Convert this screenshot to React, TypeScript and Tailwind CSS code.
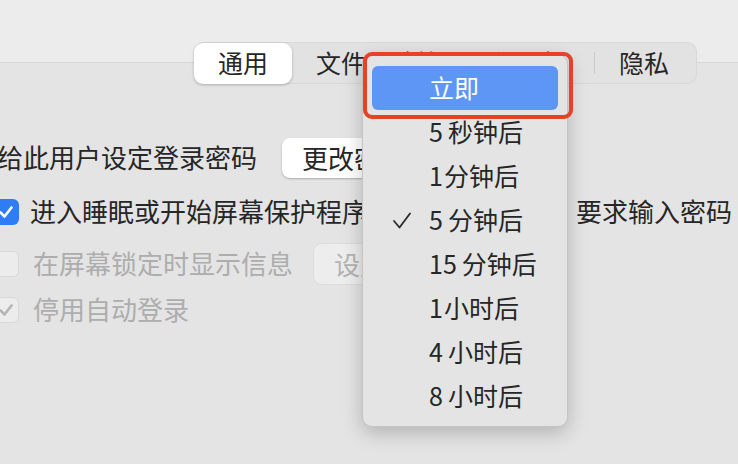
import { ReactNode } from 'react'

const font = { fontFamily: '"Noto Sans CJK SC", "Noto Sans", sans-serif' }

const items: [string, string][] = [
  ['', '立即'],
  ['5', '秒钟后'],
  ['1', '分钟后'],
  ['5', '分钟后'],
  ['15', '分钟后'],
  ['1', '小时后'],
  ['4', '小时后'],
  ['8', '小时后'],
]

function Checkbox({ checked, disabled }: { checked?: boolean; disabled?: boolean }) {
  if (checked && !disabled) {
    return (
      <div className="w-[26px] h-[26px] rounded-[6px] bg-[#2f7df6] flex items-center justify-center shrink-0">
        <svg width="18" height="18" viewBox="0 0 18 18">
          <polyline points="3.5,9.5 7.5,13.5 14.5,4.5" fill="none" stroke="white" strokeWidth="2.6" strokeLinecap="round" strokeLinejoin="round" />
        </svg>
      </div>
    )
  }
  return (
    <div className="w-[26px] h-[26px] rounded-[6px] bg-[#ececec] border border-[#d9d9d9] flex items-center justify-center shrink-0">
      {checked && (
        <svg width="18" height="18" viewBox="0 0 18 18">
          <polyline points="3.5,9.5 7.5,13.5 14.5,4.5" fill="none" stroke="#b5b5b5" strokeWidth="2.6" strokeLinecap="round" strokeLinejoin="round" />
        </svg>
      )}
    </div>
  )
}

function Button({ children, disabled, className = '' }: { children: ReactNode; disabled?: boolean; className?: string }) {
  return (
    <div className={`h-[40px] rounded-[8px] flex items-center px-[20px] shrink-0 ${disabled ? 'bg-[#ededed] text-[#b3b3b3] shadow-[0_0_0_1px_#dcdcdc]' : 'bg-white text-[#262626] shadow-[0_1px_2px_rgba(0,0,0,0.25)]'} ${className}`}>
      {children}
    </div>
  )
}

export default function App() {
  return (
    <div className="relative w-[738px] h-[464px] overflow-hidden bg-[#e4e4e4] text-[26px] leading-none text-[#262626]" style={font}>
      {/* toolbar */}
      <div className="h-[63px] bg-[#ececec] border-b border-[#d6d6d6]" />

      {/* tabs */}
      <div className="relative -mt-[21px] ml-[194px] w-[503px] h-[42px] rounded-[10px] bg-[#e2e2e2] shadow-[inset_0_0_0_1px_#d8d8d8] flex items-center text-[25px]">
        <div className="w-[98px] h-[41px] rounded-[9px] bg-white shadow-[0_1px_3px_rgba(0,0,0,0.25)] flex items-center justify-center">
          <span className="-mt-[2px]">通用</span>
        </div>
        <div className="w-[180px] pl-[24px] -mt-[2px] whitespace-nowrap">文件保险箱</div>
        <div className="w-[122px] pl-[10px] -mt-[2px] whitespace-nowrap">防火墙</div>
        <div className="w-[1px] h-[22px] bg-[#c9c9c9]" />
        <div className="pl-[24px] -mt-[2px]">隐私</div>
      </div>

      {/* rows */}
      <div className="flex flex-col mt-[54px] whitespace-nowrap">
        <div className="flex items-center h-[40px] -ml-[3px]">
          <span className="-mt-[3px]">给此用户设定登录密码</span>
          <Button className="ml-[25px]">更改密码…</Button>
        </div>
        <div className="flex items-center h-[40px] mt-[14px] -ml-[7px]">
          <Checkbox checked />
          <span className="ml-[11px] -mt-[2px]">进入睡眠或开始屏幕保护程序</span>
          <div className="ml-[12px] w-[186px] h-[40px] shrink-0" />
          <span className="ml-[10px] -mt-[2px]">要求输入密码</span>
        </div>
        <div className="flex items-center h-[40px] mt-[12px] -ml-[7px]">
          <Checkbox disabled />
          <span className="ml-[14px] -mt-[2px] text-[#adadad]">在屏幕锁定时显示信息</span>
          <Button disabled className="ml-[21px]">设定锁定信息…</Button>
        </div>
        <div className="flex items-center h-[40px] mt-[6px] -ml-[7px]">
          <Checkbox checked disabled />
          <span className="ml-[14px] -mt-[2px] text-[#adadad]">停用自动登录</span>
        </div>
      </div>

      {/* popup menu */}
      <div className="absolute left-[362px] top-[54px] w-[206px] h-[373px] rounded-[10px] bg-[#e4e4e4] border border-[#c4c4c4] shadow-[0_6px_20px_rgba(0,0,0,0.22)] pt-[11px] px-[9px] text-[25px]">
        {items.map(([n, t], i) => (
          <div key={i} className={`relative h-[44px] rounded-[6px] flex items-center pl-[57px] ${i === 0 ? 'bg-[#5e96f5] text-white' : ''}`}>
            {i === 3 && (
              <svg className="absolute left-[20px] top-[14px]" width="20" height="18" viewBox="0 0 20 18">
                <polyline points="2,9 7.5,15.5 18,1.5" fill="none" stroke="#2a2a2a" strokeWidth="1.8" strokeLinecap="round" strokeLinejoin="round" />
              </svg>
            )}
            <span className="-mt-[2px] whitespace-nowrap">
              {n && <span className={n === '1' ? 'mr-[1px]' : 'mr-[5px]'}>{n}</span>}
              {t}
            </span>
          </div>
        ))}
      </div>

      {/* annotation */}
      <div className="absolute left-[363px] top-[52px] w-[210px] h-[67px] rounded-[9px] border-[4px] border-[#e8412a]" />
    </div>
  )
}
